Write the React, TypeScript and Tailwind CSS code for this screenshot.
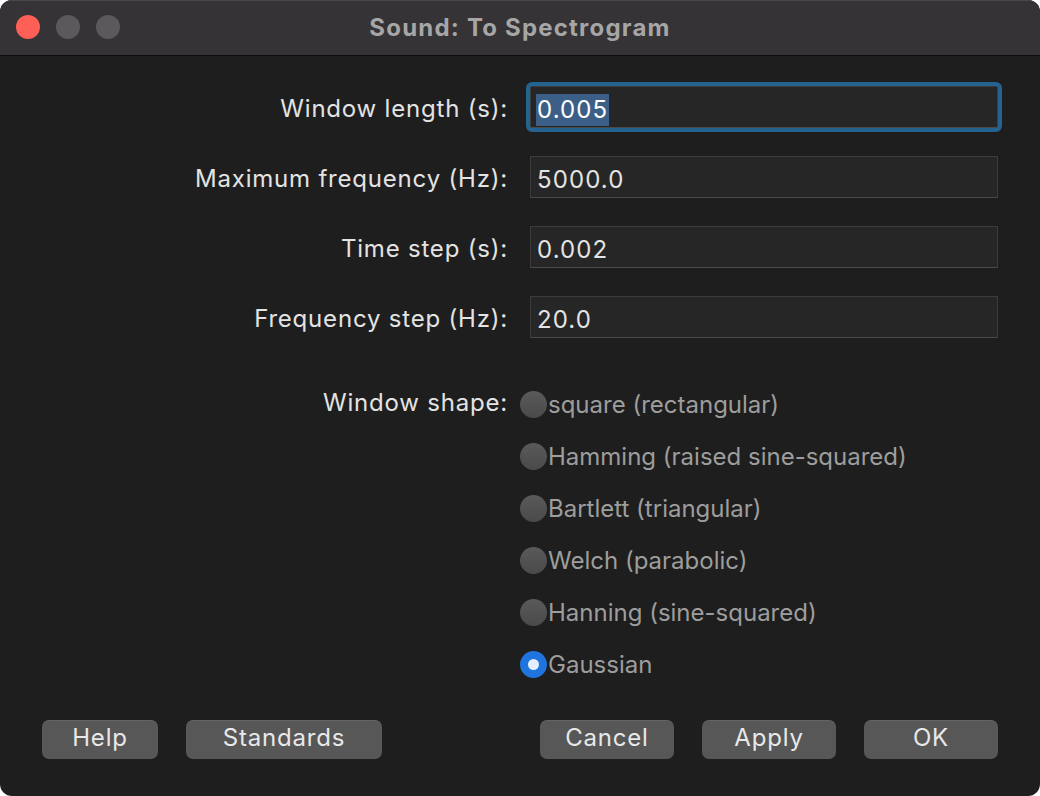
import { useState } from "react";

const FIELDS = [
  { label: "Window length (s):", value: "0.005", focused: true },
  { label: "Maximum frequency (Hz):", value: "5000.0" },
  { label: "Time step (s):", value: "0.002" },
  { label: "Frequency step (Hz):", value: "20.0" },
];

const SHAPES = [
  "square (rectangular)",
  "Hamming (raised sine-squared)",
  "Bartlett (triangular)",
  "Welch (parabolic)",
  "Hanning (sine-squared)",
  "Gaussian",
];

function Radio({ checked }: { checked: boolean }) {
  if (checked) {
    return (
      <span className="w-[27px] h-[27px] rounded-full bg-[#1f74de] flex items-center justify-center shrink-0">
        <span className="w-[11px] h-[11px] rounded-full bg-[#e4eefc]" />
      </span>
    );
  }
  return (
    <span className="w-[27px] h-[27px] rounded-full bg-gradient-to-b from-[#5a5a5a] to-[#4a4a4a] shrink-0" />
  );
}

function Button({ label, w }: { label: string; w: string }) {
  return (
    <button
      className={`${w} h-[39px] rounded-[7px] bg-[#575757] text-[#e8e8e8] text-[24px] tracking-[0.8px] leading-none flex items-center justify-center pb-[3px] shadow-[inset_0_1px_0_rgba(255,255,255,0.08)]`}
    >
      {label}
    </button>
  );
}

export default function App() {
  const [shape, setShape] = useState(5);
  return (
    <div className="w-[1040px] h-[796px] bg-white font-['Inter',sans-serif]">
      <div className="w-full h-full rounded-[12px] overflow-hidden bg-[#1e1e1e] flex flex-col">
        {/* title bar */}
        <div className="relative h-[56px] shrink-0 bg-[#353335] border-t border-[#4a484a] border-b border-b-[#0e0e0e] flex items-center justify-center">
          <div className="absolute left-[16px] top-[14px] flex gap-[16px]">
            <span className="w-[24px] h-[24px] rounded-full bg-[#fe5f57]" />
            <span className="w-[24px] h-[24px] rounded-full bg-[#5b595b]" />
            <span className="w-[24px] h-[24px] rounded-full bg-[#5b595b]" />
          </div>
          <span className="text-[24px] font-bold text-[#a7a6a7] tracking-[1.2px]">Sound: To Spectrogram</span>
        </div>

        {/* fields */}
        <div className="mt-[30px] flex flex-col gap-[28px]">
          {FIELDS.map((f) => (
            <div key={f.label} className="flex items-center h-[42px]">
              <div className="w-[508px] text-right text-[24px] text-[#e3e3e3] tracking-[0.8px] mt-[3px]">{f.label}</div>
              <div className="ml-[22px] w-[468px] h-[42px] relative">
                {f.focused && (
                  <div className="absolute -inset-[4px] rounded-[6px] border-[4px] border-[#24628f]" />
                )}
                <div className="w-full h-full bg-[#262626] border border-[#3c3c3c] border-b-[#4a4a4a] flex items-center px-[5px]">
                  <span
                    className={`text-[24px] leading-[32px] tracking-[1.1px] px-[1px] mt-[5px] ${
                      f.focused ? "bg-[#3c5f88] text-white" : "text-[#e3e3e3]"
                    }`}
                  >
                    {f.value}
                  </span>
                </div>
              </div>
            </div>
          ))}
        </div>

        {/* window shape */}
        <div className="mt-[40px] flex">
          <div className="w-[508px] text-right text-[24px] text-[#e3e3e3] tracking-[0.8px] h-[52px] flex items-center justify-end -mt-[1px]">
            Window shape:
          </div>
          <div className="ml-[12px] flex flex-col">
            {SHAPES.map((s, i) => (
              <label
                key={s}
                onClick={() => setShape(i)}
                className="h-[52px] flex items-center text-[24px] text-[#9d9d9d] cursor-default"
              >
                <Radio checked={shape === i} />
                <span className="ml-[1px] mt-[1px]">{s}</span>
              </label>
            ))}
          </div>
        </div>

        {/* buttons */}
        <div className="mt-[30px] flex pl-[42px]">
          <Button label="Help" w="w-[116px]" />
          <div className="ml-[28px]">
            <Button label="Standards" w="w-[196px]" />
          </div>
          <div className="ml-[158px] flex gap-[28px]">
            <Button label="Cancel" w="w-[134px]" />
            <Button label="Apply" w="w-[134px]" />
            <Button label="OK" w="w-[134px]" />
          </div>
        </div>
      </div>
    </div>
  );
}
